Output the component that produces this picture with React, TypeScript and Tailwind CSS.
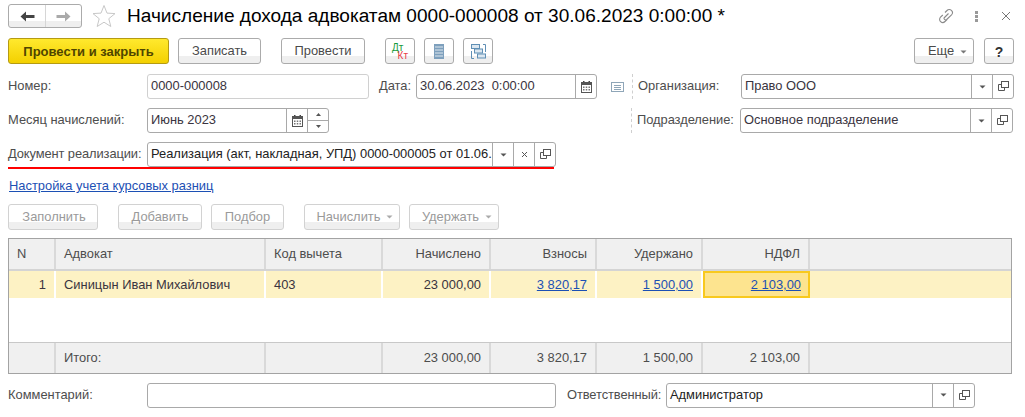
import type { ReactNode } from "react";

const FONT = "font-['Liberation_Sans',Arial,sans-serif]";

function Caret({ color = "#555" }: { color?: string }) {
  return (
    <svg width="7" height="4" viewBox="0 0 7 4" className="shrink-0">
      <path d="M0.5 0.5h6L3.5 3.5z" fill={color} />
    </svg>
  );
}

function OpenIcon() {
  return (
    <svg width="11" height="11" viewBox="0 0 11 11" fill="none" stroke="#555" className="shrink-0">
      <rect x="3.500" y="0.500" width="7" height="6" />
      <path d="M3.500 3.500H0.500V9.500H6.500V6.500" />
    </svg>
  );
}

function CalendarIcon() {
  return (
    <svg width="11" height="12" viewBox="0 0 11 12" className="shrink-0">
      <path d="M2 0h1.500v2H2zM7.500 0H9v2H7.500z" fill="#444" />
      <rect x="0.500" y="1.500" width="10" height="10" fill="#fff" stroke="#555" />
      <rect x="0.500" y="1.500" width="10" height="2.500" fill="#555" />
      <path d="M2 5.500h1.500V7H2zM4.750 5.500h1.500V7h-1.500zM7.500 5.500H9V7H7.500zM2 8h1.500v1.500H2zM4.750 8h1.500v1.500h-1.500zM7.500 8H9v1.500H7.500z" fill="#777" />
    </svg>
  );
}

function Btn({
  children,
  className = "",
  dim = false,
}: {
  children: ReactNode;
  className?: string;
  dim?: boolean;
}) {
  return (
    <div
      className={`h-[26px] flex items-center justify-center gap-[6px] rounded-[3px] border bg-[linear-gradient(#fff_0,#fff_70%,#efefef_70%,#efefef_100%)] pt-[1px] ${
        dim ? "border-[#d2d2d2] text-[#9a9a9a]" : "border-[#ababab] text-[#4a4a4a]"
      } ${className}`}
    >
      {children}
    </div>
  );
}

function Cell({ children }: { children: ReactNode }) {
  return <div className="w-[21px] h-full shrink-0 flex items-center justify-center border-l border-[#a9a9a9]">{children}</div>;
}

function Field({
  text,
  className = "",
  light = false,
  children,
}: {
  text?: string;
  className?: string;
  light?: boolean;
  children?: ReactNode;
}) {
  return (
    <div
      className={`h-[25px] flex items-center rounded-[3px] border bg-white text-[#3a3440] ${
        light ? "border-[#d0d0d0]" : "border-[#a9a9a9]"
      } ${className}`}
    >
      <div className="flex-1 min-w-0 pl-[3px] whitespace-nowrap">{text}</div>
      {children}
    </div>
  );
}

function Label({ children, className = "" }: { children: ReactNode; className?: string }) {
  return <div className={`shrink-0 text-[#4d4d4d] whitespace-nowrap ${className}`}>{children}</div>;
}

const COLS = "grid grid-cols-[47px_210px_117px_108px_106px_106px_107px_1fr]";

function HeadCell({ children, right = false }: { children?: ReactNode; right?: boolean }) {
  return (
    <div
      className={`h-[30px] flex items-center px-[8px] pt-[2px] bg-[#f0f0f0] border-r-2 border-[#d9d9d9] last:border-r-0 text-[#4d4d4d] whitespace-nowrap ${
        right ? "justify-end" : ""
      }`}
    >
      {children}
    </div>
  );
}

function RowCell({ children, right = false, link = false }: { children?: ReactNode; right?: boolean; link?: boolean }) {
  return (
    <div
      className={`h-[27px] flex items-center px-[8px] pt-[2px] bg-[#fdf2c4] border-r-2 border-white last:border-r-0 whitespace-nowrap ${
        right ? "justify-end" : ""
      } ${link ? "text-[#1c50b4] underline" : "text-[#3a3440]"}`}
    >
      {children}
    </div>
  );
}

export default function App() {
  return (
    <div className={`${FONT} w-[1025px] h-[417px] overflow-hidden bg-white text-[12.9px] leading-none px-[8px] pt-[4px]`}>
      {/* title */}
      <div className="h-[24px] flex items-center">
        <div className="w-[74px] h-[24px] flex rounded-[3px] border border-[#ababab] bg-[linear-gradient(#fff_0,#fff_75%,#efefef_75%,#efefef_100%)]">
          <div className="w-[37px] flex items-center justify-center border-r border-[#d6d6d6]">
            <svg width="15" height="11" viewBox="0 0 15 11"><path d="M6 0.500v3.500h8.500v3H6v3.500L0.500 5.500z" fill="#444" /></svg>
          </div>
          <div className="flex-1 flex items-center justify-center">
            <svg width="15" height="11" viewBox="0 0 15 11"><path d="M9 0.500v3.500H0.500v3H9v3.500l5.500-5z" fill="#aaa" /></svg>
          </div>
        </div>
        <svg width="24" height="24" viewBox="0 0 24 24" fill="none" stroke="#c8c8c8" className="ml-[10px]">
          <path d="M12 1.500l3 7.600 8 .5-6.200 5.100 2 7.800L12 18.200l-6.800 4.300 2-7.800L1 9.600l8-.5z" />
        </svg>
        <div className="ml-[11px] text-[19.06px] text-black whitespace-nowrap">
          Начисление дохода адвокатам 0000-000008 от 30.06.2023 0:00:00 *
        </div>
        <div className="ml-auto flex items-center">
          <svg width="16" height="16" viewBox="0 0 16 16" fill="none" stroke="#8a8a8a" strokeWidth="1.100">
            <path d="M6 10l4.500-4.500M7 4.500l2-2a3 3 0 0 1 4.500 4.300l-4.800 4.700a1.600 1.600 0 0 1-2.300-2.200M9 11.500l-2 2A3 3 0 0 1 2.500 9.200L4.800 7" />
          </svg>
          <div className="ml-[21px] flex flex-col gap-[1px]">
            <div className="w-[3px] h-[3px] bg-[#999]" />
            <div className="w-[3px] h-[3px] bg-[#999]" />
            <div className="w-[3px] h-[3px] bg-[#999]" />
          </div>
          <svg width="10" height="10" viewBox="0 0 10 10" stroke="#777" className="ml-[23px] mr-[6px]">
            <path d="M1 1l8 8M9 1l-8 8" />
          </svg>
        </div>
      </div>

      {/* toolbar */}
      <div className="mt-[10px] flex items-center">
        <div className="w-[161px] h-[26px] flex items-center justify-center pt-[1px] rounded-[3px] border border-[#b59b12] bg-[linear-gradient(#ffe92e,#f3d000)] text-[#4f4500] font-bold text-[13px]">
          Провести и закрыть
        </div>
        <Btn className="ml-[9px] w-[83px]">Записать</Btn>
        <Btn className="ml-[20px] w-[84px]">Провести</Btn>
        <Btn className="ml-[20px] w-[30px]">
          <div className="w-[16px] flex flex-col text-[10px] leading-[8px]">
            <span className="text-[#179a3c]">Дт</span>
            <span className="self-end text-[#e8404a]">Кт</span>
          </div>
        </Btn>
        <Btn className="ml-[9px] w-[30px]">
          <svg width="10" height="15" viewBox="0 0 10 15">
            <rect width="10" height="15" fill="#7ea0bd" />
            <path d="M1 3h8M1 6h8M1 9h8M1 12h8" stroke="#dfe8ef" />
          </svg>
        </Btn>
        <Btn className="ml-[9px] w-[30px]">
          <svg width="15" height="15" viewBox="0 0 15 15" fill="#dce7f0" stroke="#5f8fb5">
            <path d="M3 14.500H.5V7M12 .5h2.500V8" fill="none" />
            <rect x="0.500" y="0.500" width="8" height="4" />
            <rect x="3.500" y="5" width="8" height="4" />
            <rect x="6.500" y="10" width="8" height="4" />
          </svg>
        </Btn>
        <Btn className="ml-auto w-[60px] pl-[7px]">
          Еще <Caret color="#777" />
        </Btn>
        <Btn className="ml-[10px] mr-[3px] w-[30px] font-bold text-[14px] text-[#333]">?</Btn>
      </div>

      {/* number / date / organisation */}
      <div className="mt-[10px] flex items-center">
        <Label className="w-[139px]">Номер:</Label>
        <Field text="0000-000008" light className="w-[222px]" />
        <Label className="ml-[10px] w-[37px]">Дата:</Label>
        <Field text={"30.06.2023\u00a0\u00a00:00:00"} className="w-[181px]">
          <Cell><CalendarIcon /></Cell>
        </Field>
        <svg width="13" height="10" viewBox="0 0 13 10" fill="none" stroke="#8fa6b8" className="ml-[14px]">
          <rect x="0.500" y="0.500" width="12" height="9" />
          <path d="M3 3.500h7M3 5.500h7M3 7.500h7" />
        </svg>
        <div className="ml-[8px] h-[25px] border-l border-dashed border-[#cfcfcf]" />
        <Label className="ml-[5px] w-[103px]">Организация:</Label>
        <Field text="Право ООО" className="w-[273px]">
          <Cell><Caret /></Cell>
          <Cell><OpenIcon /></Cell>
        </Field>
      </div>

      {/* month / department */}
      <div className="mt-[9px] flex items-center">
        <Label className="w-[139px]">Месяц начислений:</Label>
        <Field text="Июнь 2023" className="w-[182px]">
          <Cell><CalendarIcon /></Cell>
          <div className="w-[21px] h-full shrink-0 flex flex-col border-l border-[#a9a9a9]">
            <div className="flex-1 flex items-center justify-center border-b border-[#a9a9a9]">
              <svg width="5" height="3" viewBox="0 0 5 3"><path d="M2.500 0L5 3H0z" fill="#555" /></svg>
            </div>
            <div className="flex-1 flex items-center justify-center">
              <svg width="5" height="3" viewBox="0 0 5 3"><path d="M0 0h5L2.500 3z" fill="#555" /></svg>
            </div>
          </div>
        </Field>
        <div className="ml-[302px] h-[25px] border-l border-dashed border-[#cfcfcf]" />
        <Label className="ml-[5px] w-[103px] tracking-[-0.05px]">Подразделение:</Label>
        <Field text="Основное подразделение" className="w-[273px]">
          <Cell><Caret /></Cell>
          <Cell><OpenIcon /></Cell>
        </Field>
      </div>

      {/* sale document, underlined in red */}
      <div className="mt-[9px] flex items-center">
        <Label className="w-[139px] tracking-[-0.1px]">Документ реализации:</Label>
        <Field text="Реализация (акт, накладная, УПД) 0000-000005 от 01.06." className="w-[409px] text-[#222]">
          <Cell><Caret /></Cell>
          <Cell>
            <svg width="7" height="7" viewBox="0 0 7 7" stroke="#555"><path d="M1 1l5 5M6 1L1 6" /></svg>
          </Cell>
          <Cell><OpenIcon /></Cell>
        </Field>
      </div>
      <div className="w-[546px] h-[2px] bg-[#ff0000]" />

      <div className="mt-[11px] ml-[1px] text-[#1c50b4] underline">Настройка учета курсовых разниц</div>

      {/* table commands */}
      <div className="mt-[11px] flex items-center">
        <Btn dim className="w-[90px] pl-[2px]">Заполнить</Btn>
        <Btn dim className="ml-[20px] w-[84px]">Добавить</Btn>
        <Btn dim className="ml-[9px] w-[73px]">Подбор</Btn>
        <Btn dim className="ml-[20px] w-[96px] pl-[6px]">Начислить <Caret color="#aaa" /></Btn>
        <Btn dim className="ml-[9px] w-[90px] pl-[6px]">Удержать <Caret color="#aaa" /></Btn>
      </div>

      {/* table */}
      <div className="mt-[8px] w-[1004px] h-[136px] flex flex-col border border-[#a3a3a3]">
        <div className={`${COLS} border-b-2 border-[#d4d4d4]`}>
          <HeadCell>N</HeadCell>
          <HeadCell>Адвокат</HeadCell>
          <HeadCell>Код вычета</HeadCell>
          <HeadCell right>Начислено</HeadCell>
          <HeadCell right>Взносы</HeadCell>
          <HeadCell right>Удержано</HeadCell>
          <HeadCell right>НДФЛ</HeadCell>
          <HeadCell />
        </div>
        <div className={COLS}>
          <RowCell right>1</RowCell>
          <RowCell>Синицын Иван Михайлович</RowCell>
          <RowCell>403</RowCell>
          <RowCell right>23 000,00</RowCell>
          <RowCell right link>3 820,17</RowCell>
          <RowCell right link>1 500,00</RowCell>
          <div className="h-[27px] flex items-center justify-end pr-[7px] pt-[2px] bg-[#fde48f] border-2 border-[#f8c91e] text-[#1c50b4] underline">
            2 103,00
          </div>
          <RowCell />
        </div>
        <div className="flex-1" />
        <div className={`${COLS} border-t border-[#c8c8c8]`}>
          <HeadCell />
          <HeadCell>Итого:</HeadCell>
          <HeadCell />
          <HeadCell right>23 000,00</HeadCell>
          <HeadCell right>3 820,17</HeadCell>
          <HeadCell right>1 500,00</HeadCell>
          <HeadCell right>2 103,00</HeadCell>
          <HeadCell />
        </div>
      </div>

      {/* comment / responsible */}
      <div className="mt-[9px] flex items-center">
        <Label className="w-[139px]">Комментарий:</Label>
        <Field className="w-[409px]" />
        <Label className="ml-[11px] w-[99px] tracking-[-0.1px]">Ответственный:</Label>
        <Field text="Администратор" className="w-[309px] text-[#222]">
          <Cell><Caret /></Cell>
          <Cell><OpenIcon /></Cell>
        </Field>
      </div>
    </div>
  );
}
